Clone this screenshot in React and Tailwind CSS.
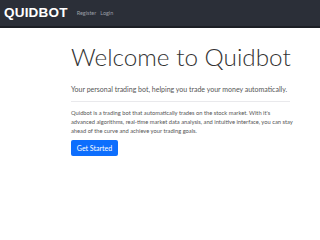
export default function App() {
  return (
    <div className="min-h-[240px] bg-white font-['Lato',sans-serif]">
      {/* Navbar */}
      <nav className="h-[28px] bg-[#2b2f38] border-b-[2px] border-[#1c1f25] flex items-center pl-[4px]">
        <span className="font-['Liberation_Sans',sans-serif] font-bold text-white text-[13.5px] tracking-[0.2px] leading-none">
          QUIDBOT
        </span>
        <div className="flex gap-[4px] ml-[9px] text-[5.5px] text-[#9a9ea6]">
          <span>Register</span>
          <span>Login</span>
        </div>
      </nav>

      {/* Content */}
      <main className="ml-[71px] w-[219px] pt-[14px]">
        <h1 className="font-light text-[#333] text-[24.3px] leading-[30px] whitespace-nowrap">Welcome to Quidbot</h1>
        <p className="mt-[12px] text-[7px] text-[#555] leading-[10px] whitespace-nowrap">
          Your personal trading bot, helping you trade your money automatically.
        </p>
        <hr className="mt-[7px] border-t border-[#e9e9ec]" />
        <p className="mt-[6px] text-[5.75px] text-[#555] leading-[9px] whitespace-nowrap">
          Quidbot is a trading bot that automatically trades on the stock market. With it's
          <br />
          advanced algorithms, real-time market data analysis, and intuitive interface, you can stay
          <br />
          ahead of the curve and achieve your trading goals.
        </p>
        <button className="mt-[5px] bg-[#0d6efd] text-white text-[7px] rounded-[2px] w-[47px] h-[16px] flex items-center justify-center">
          Get Started
        </button>
      </main>
    </div>
  );
}
